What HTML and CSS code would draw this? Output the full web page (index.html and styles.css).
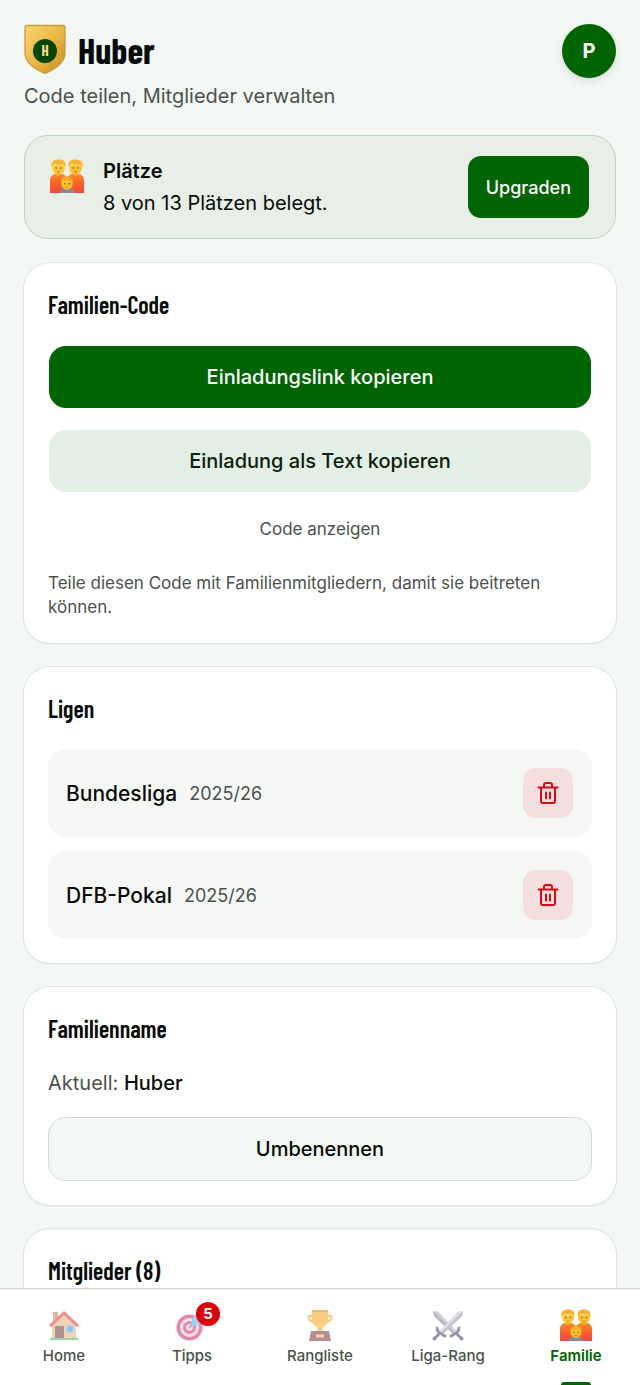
FILE: index.html
```html
<!DOCTYPE html>
<html lang="de">
<head>
  <meta charset="UTF-8">
  <meta name="viewport" content="width=device-width, initial-scale=1">
  <title>Huber | Familie</title>
  <link rel="stylesheet" href="styles.css">
</head>
<body>

  <!-- shared icons -->
  <svg class="sprite" aria-hidden="true">
    <defs>
      <linearGradient id="bodyFill" x1="0" y1="0" x2="0" y2="1">
        <stop offset="0" stop-color="#f98a2c"/>
        <stop offset=".4" stop-color="#fa6a26"/>
        <stop offset="1" stop-color="#f4453c"/>
      </linearGradient>
      <linearGradient id="skinFill" x1="0" y1="0" x2="1" y2="1">
        <stop offset="0" stop-color="#ffd23a"/>
        <stop offset="1" stop-color="#fbb92c"/>
      </linearGradient>
    </defs>
    <symbol id="family" viewBox="0 0 32 32">
      <path d="M0 32V20q0-5 5-6h6q5 1 5 6v12z" fill="url(#bodyFill)"/>
      <path d="M16 32V20q0-5 5-6h6q5 1 5 6v12z" fill="url(#bodyFill)"/>
      <path d="M5.500 12h5v3q-2.500 2.500-5 0zM21.500 12h5v3q-2.500 2.500-5 0z" fill="#f0a51d"/>
      <path d="M2 5.500h12V9q-1 5.500-6 5.500T2 9zM18 5.500h12V9q-1 5.500-6 5.500T18 9z" fill="url(#skinFill)"/>
      <path d="M1.500 7Q.500 4 2.500 2.500 4 .300 6.500.800 8-.300 10 .700q3 0 3.800 2.300 1.200 1.500.4 4l-1.500-2Q8 6 5 4.500L3 5.500z" fill="#f9b02e"/>
      <path d="M17.800 7q-1-3 .7-4.500 1-2.200 3.500-1.800Q24-.300 26 .800q3 .2 3.800 2.200 1.400 2 .5 4l-1.500-2Q24 6 21 4.500L19 5.500z" fill="#f9b02e"/>
      <path d="M9 32q0-4 4-4.500h6q4 .5 4 4.500z" fill="#8c8795"/>
      <circle cx="16" cy="23.500" r="5.400" fill="url(#skinFill)"/>
      <path d="M10.500 22.500q-1-4.500 3-5.500 4-1.500 6.500.800 2.500 1.200 1.500 4.700l-2-2.500q-4 1.500-7 0z" fill="#f9a928"/>
      <g fill="#5b3b2c">
        <circle cx="5.800" cy="8.500" r=".7"/><circle cx="10.200" cy="8.500" r=".7"/>
        <circle cx="21.800" cy="8.500" r=".7"/><circle cx="26.200" cy="8.500" r=".7"/>
        <circle cx="14" cy="23.300" r=".7"/><circle cx="18" cy="23.300" r=".7"/>
      </g>
      <path d="M6.500 11.800q1.500 1.600 3 0zM22.500 11.800q1.500 1.600 3 0zM14.500 26q1.500 1.500 3 0z" fill="#c8372d"/>
    </symbol>
    <symbol id="trash" viewBox="0 0 24 24">
      <path d="M2.500 6.500h19M5 6.500V20a2 2 0 0 0 2 2h10a2 2 0 0 0 2-2V6.500M8 6V4a2 2 0 0 1 2-2h4a2 2 0 0 1 2 2v2M10 11.500v6M14 11.500v6" fill="none" stroke="currentColor" stroke-width="2" stroke-linecap="round" stroke-linejoin="round"/>
    </symbol>
  </svg>

  <div class="app">
    <main class="content">
      <header class="header">
        <div>
          <div class="brand">
            <svg class="crest" viewBox="0 0 42 52" aria-hidden="true">
              <defs>
                <linearGradient id="gold" x1="0" y1="0" x2="1" y2="1">
                  <stop offset="0" stop-color="#fcd673"/>
                  <stop offset=".5" stop-color="#ecb843"/>
                  <stop offset="1" stop-color="#c98a1a"/>
                </linearGradient>
              </defs>
              <path d="M3 1.500h36q2 0 2 2V29q0 12-20 20.500Q1 41 1 29V3.500q0-2 2-2z" fill="url(#gold)" stroke="#c99b3c" stroke-width="1.300"/>
              <circle cx="21" cy="27" r="12" fill="#034703"/>
              <text x="21" y="32" text-anchor="middle" class="crest-letter">H</text>
            </svg>
            <h1>Huber</h1>
          </div>
          <p class="subtitle">Code teilen, Mitglieder verwalten</p>
        </div>
        <button class="avatar" type="button" aria-label="Profil">P</button>
      </header>

      <section class="banner">
        <svg class="banner-icon" aria-hidden="true"><use href="#family"/></svg>
        <div class="banner-text">
          <strong>Plätze</strong>
          <p>8 von 13 Plätzen belegt.</p>
        </div>
        <button class="btn btn-primary btn-small" type="button">Upgraden</button>
      </section>

      <section class="card">
        <h2>Familien-Code</h2>
        <div class="actions">
          <button class="btn btn-primary" type="button">Einladungslink kopieren</button>
          <button class="btn btn-soft" type="button">Einladung als Text kopieren</button>
        </div>
        <button class="btn-text" type="button">Code anzeigen</button>
        <p class="hint">Teile diesen Code mit Familienmitgliedern, damit sie beitreten können.</p>
      </section>

      <section class="card">
        <h2>Ligen</h2>
        <ul class="leagues">
          <li>
            <span class="league">Bundesliga</span>
            <span class="season">2025/26</span>
            <button class="btn-delete" type="button" aria-label="Bundesliga entfernen"><svg><use href="#trash"/></svg></button>
          </li>
          <li>
            <span class="league">DFB-Pokal</span>
            <span class="season">2025/26</span>
            <button class="btn-delete" type="button" aria-label="DFB-Pokal entfernen"><svg><use href="#trash"/></svg></button>
          </li>
        </ul>
      </section>

      <section class="card">
        <h2>Familienname</h2>
        <p class="current">Aktuell: <strong>Huber</strong></p>
        <button class="btn btn-outline" type="button">Umbenennen</button>
      </section>

      <section class="card">
        <h2>Mitglieder (8)</h2>
      </section>
    </main>

    <nav class="tabbar">
      <a href="#home">
        <svg class="tab-icon" viewBox="0 0 32 32" aria-hidden="true">
          <path d="M5 3h5v10H5z" fill="#c98d5b"/>
          <path d="M4 14 16 4l12 10v15H4z" fill="#efb483"/>
          <path d="M16 2 1 16l2 2L16 6l13 12 2-2z" fill="#e4424d"/>
          <path d="M7 17h9v12H7z" fill="#7d4b45"/>
          <path d="M19 17h6v6h-6z" fill="#3f9df0" stroke="#75b9f4"/>
          <path d="M1 31q1-3 5-2h20q4-1 5 2z" fill="#45c06f"/>
        </svg>
        <span>Home</span>
      </a>
      <a href="#tipps">
        <span class="icon-wrap">
          <svg class="tab-icon" viewBox="0 0 32 32" aria-hidden="true">
            <circle cx="13.500" cy="18.500" r="13" fill="#d63a74"/>
            <circle cx="13.500" cy="18.500" r="9.500" fill="#ecd0de"/>
            <circle cx="13.500" cy="18.500" r="6.500" fill="#d63a74"/>
            <circle cx="13.500" cy="18.500" r="3.300" fill="#ecd0de"/>
            <path d="m13 19 9-10" stroke="#6f78a8" stroke-width="2"/>
            <path d="m15 17 1-8 8-7 1 5 5 1-7 8z" fill="#55b8ec"/>
          </svg>
          <span class="badge">5</span>
        </span>
        <span>Tipps</span>
      </a>
      <a href="#rangliste">
        <svg class="tab-icon" viewBox="0 0 32 32" aria-hidden="true">
          <path d="M9 7H5.500Q4 7 4.500 9q1 4 6.500 4M23 7h3.500q1.500 0 1 2-1 4-6.500 4" fill="none" stroke="#f0a21e" stroke-width="2"/>
          <path d="M8 1h16v8q0 7-5 9-1.500 2 0 5h-6q1.500-3 0-5-5-2-5-9z" fill="#fbaa2b"/>
          <path d="M8 1h16v2H8z" fill="#e08a17"/>
          <path d="M7 22h18l2 10H5z" fill="#8a3f52"/>
          <path d="M12 25.500h8v3h-8z" fill="#fbc04a"/>
        </svg>
        <span>Rangliste</span>
      </a>
      <a href="#liga">
        <svg class="tab-icon" viewBox="0 0 32 32" aria-hidden="true">
          <path d="m1 2 5 .5 18 19-3 3L2 7z" fill="#b3aebf"/>
          <path d="m1 2 21.500 21.500L21 25 2 7z" fill="#8b8799"/>
          <path d="m31 2-5 .5-18 19 3 3L30 7z" fill="#c9c5d2"/>
          <path d="M31 2 9.500 23.500 11 25 30 7z" fill="#9b97a8"/>
          <path d="M5 19q0 3 3 5t5 3M27 19q0 3-3 5t-5 3" fill="none" stroke="#59566d" stroke-width="3" stroke-linecap="round"/>
          <path d="m8 24-5 5M24 24l5 5" stroke="#51449a" stroke-width="3"/>
          <circle cx="2.500" cy="29.500" r="2" fill="#5b4d93"/>
          <circle cx="29.500" cy="29.500" r="2" fill="#5b4d93"/>
        </svg>
        <span>Liga-Rang</span>
      </a>
      <a href="#familie" class="active" aria-current="page">
        <svg class="tab-icon" aria-hidden="true"><use href="#family"/></svg>
        <span>Familie</span>
      </a>
    </nav>
  </div>

</body>
</html>
```
FILE: styles.css
```css
* {
  box-sizing: border-box;
}

body {
  margin: 0;
  background-color: #f3f8f5;
  color: #080c08;
  font-family: Inter, "Liberation Sans", sans-serif;
  font-size: 20px;
}

h1, h2, p, ul {
  margin: 0;
  padding: 0;
}

h1, h2 {
  font-family: "Barlow Condensed", "Liberation Sans Narrow", sans-serif;
  font-weight: bold;
}

button {
  font-family: inherit;
  cursor: pointer;
}

.sprite {
  position: absolute;
  width: 0;
  height: 0;
}

.app {
  display: flex;
  flex-direction: column;
  height: 100vh;
}

.content {
  flex: 1;
  min-height: 0;
  overflow: hidden;
  padding: 24px 24px 0;
  display: flex;
  flex-direction: column;
  gap: 24px;
}

.content > * {
  flex-shrink: 0;
}

/* header */
.header {
  display: flex;
  justify-content: space-between;
  align-items: flex-start;
}

.brand {
  display: flex;
  align-items: center;
  gap: 12px;
  height: 52px;
}

.crest {
  width: 42px;
  height: 52px;
}

.crest-letter {
  font: bold 15px "Barlow Condensed", "Liberation Sans Narrow", sans-serif;
  fill: #f6dc83;
}

h1 {
  font-size: 36px;
  line-height: 40px;
}

.subtitle {
  margin-top: 6px;
  line-height: 29px;
  color: #4b524c;
}

.avatar {
  width: 54px;
  height: 54px;
  padding: 0;
  border: none;
  border-radius: 50%;
  background-color: #006400;
  color: white;
  font-size: 20px;
  font-weight: bold;
  box-shadow: 0 4px 8px #0000001a;
}

/* seats banner */
.banner {
  display: flex;
  align-items: flex-start;
  padding: 19px 25px;
  border: 1px solid #bcd3bf;
  border-radius: 24px;
  background-color: #e7efe7;
}

.banner-icon {
  width: 34px;
  height: 34px;
  margin: 4px 19px 0 0;
}

.banner-text {
  flex: 1;
  line-height: 32px;
}

.banner-text strong {
  font-weight: 600;
}

/* buttons */
.btn {
  width: 100%;
  height: 64px;
  padding: 0 18px;
  border: 1px solid transparent;
  border-radius: 18px;
  background-clip: padding-box;
  font-size: 20px;
  font-weight: 500;
}

.btn-primary {
  background-color: #006400;
  color: white;
}

.btn-soft {
  background-color: #e3eee4;
  color: #0a1f0c;
}

.btn-outline {
  border-color: #d2dad4;
  background-color: #f3f8f5;
  color: #080c08;
}

.btn-small {
  width: auto;
  border-radius: 14px;
  font-size: 18px;
}

.btn-text {
  display: block;
  width: 100%;
  height: 48px;
  margin: 12px 0 18px;
  border: none;
  background: none;
  color: #4b524c;
  font-size: 17px;
}

/* cards */
.card {
  padding: 24px;
  border-radius: 26px;
  background-color: white;
  box-shadow: 0 0 0 1px #dce3dd, 0 1px 2px #00000014;
}

h2 {
  margin-bottom: 22px;
  font-size: 24px;
  font-weight: 600;
  line-height: 36px;
}

.actions {
  display: flex;
  flex-direction: column;
  gap: 20px;
}

.hint {
  color: #4b524c;
  font-size: 17px;
  line-height: 24px;
}

.leagues {
  display: flex;
  flex-direction: column;
  gap: 14px;
  list-style: none;
}

.leagues li {
  display: flex;
  align-items: center;
  gap: 12px;
  height: 88px;
  padding: 0 18px;
  border-radius: 18px;
  background-color: #f5f7f5;
}

.league {
  font-size: 21px;
  font-weight: 500;
}

.season {
  color: #4b524c;
  font-size: 18px;
}

.btn-delete {
  display: flex;
  align-items: center;
  justify-content: center;
  width: 52px;
  height: 52px;
  margin-left: auto;
  padding: 0;
  border: 1px solid transparent;
  border-radius: 14px;
  background-color: #f5dfde;
  background-clip: padding-box;
  color: #d90a14;
}

.btn-delete svg {
  width: 24px;
  height: 24px;
}

.current {
  margin-bottom: 20px;
  color: #4b524c;
  line-height: 28px;
}

.current strong {
  color: #080c08;
  font-weight: 500;
}

/* bottom navigation */
.tabbar {
  display: grid;
  grid-template-columns: repeat(5, 1fr);
  height: 97px;
  border-top: 1px solid #cdd2ce;
  background-color: white;
}

.tabbar a {
  display: flex;
  flex-direction: column;
  align-items: center;
  gap: 5px;
  padding-top: 20px;
  color: #4b524c;
  font-size: 15px;
  font-weight: 500;
  line-height: 20px;
  text-decoration: none;
}

.tab-icon {
  display: block;
  width: 32px;
  height: 32px;
  opacity: 0.6;
}

.icon-wrap {
  position: relative;
}

.badge {
  position: absolute;
  top: -7px;
  right: -12px;
  width: 24px;
  height: 24px;
  border-radius: 50%;
  background-color: #e0000b;
  color: white;
  font-weight: bold;
  line-height: 24px;
  text-align: center;
}

.tabbar .active {
  color: #006400;
  font-weight: 600;
}

.active .tab-icon {
  opacity: 1;
}

.active::after {
  content: "";
  width: 30px;
  height: 3px;
  margin-top: auto;
  border-radius: 3px 3px 0 0;
  background-color: #006400;
}
```
